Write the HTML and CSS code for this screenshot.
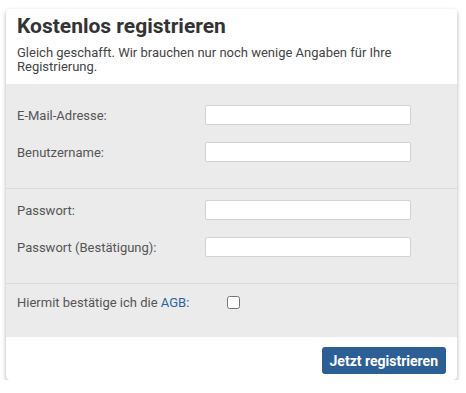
FILE: index.html
```html
<!DOCTYPE html>
<html lang="de">
<head>
    <meta charset="UTF-8">
    <meta name="viewport" content="width=device-width, initial-scale=1.0">
    <title>Kostenlos registrieren</title>
    <link rel="stylesheet" href="styles.css">
</head>
<body>
    <div class="card">
        <div class="card-head">
            <h1>Kostenlos registrieren</h1>
            <p class="intro">Gleich geschafft. Wir brauchen nur noch wenige Angaben für Ihre Registrierung.</p>
        </div>

        <div class="card-body">
            <div class="section section-first">
                <div class="form-row">
                    <label for="email">E-Mail-Adresse:</label>
                    <input type="text" id="email">
                </div>
                <div class="form-row">
                    <label for="username">Benutzername:</label>
                    <input type="text" id="username">
                </div>
            </div>

            <div class="section">
                <div class="form-row">
                    <label for="pw">Passwort:</label>
                    <input type="password" id="pw">
                </div>
                <div class="form-row">
                    <label for="pw2">Passwort (Bestätigung):</label>
                    <input type="password" id="pw2">
                </div>
            </div>

            <div class="section section-last">
                <div class="form-row check-row">
                    <label for="agb">Hiermit bestätige ich die <a href="#">AGB</a>:</label>
                    <input type="checkbox" id="agb">
                </div>
            </div>
        </div>

        <div class="card-foot">
            <button type="button">Jetzt registrieren</button>
        </div>
    </div>
</body>
</html>
```

FILE: styles.css
```css
body {
    margin: 0;
    padding: 9px 0 0 6px;
    background: #fff;
    font-family: Roboto, "Liberation Sans", Arial, sans-serif;
    color: #555;
}
.card {
    width: 451px;
    background: #fff;
    border-radius: 4px;
    box-shadow: 0 2px 4px rgba(0,0,0,0.32);
    overflow: hidden;
}
.card-head {
    padding: 5px 11px 10px;
}
h1 {
    margin: 0;
    font-size: 21px;
    line-height: 25px;
    font-weight: bold;
    color: #333;
}
.intro {
    margin: 7px 0 0;
    font-size: 13px;
    line-height: 14px;
    color: #444;
}
.card-body {
    background: #ebebeb;
}
.section {
    padding: 11px 11px 26px;
    border-bottom: 1px solid #d9d9d9;
}
.section-first {
    padding-top: 21px;
}
.section-last {
    padding-top: 8px;
    padding-bottom: 25px;
    border-bottom: none;
}
.form-row {
    display: flex;
    align-items: center;
    height: 20px;
}
.form-row + .form-row {
    margin-top: 17px;
}
label {
    width: 188px;
    font-size: 13px;
    color: #555;
}
label a {
    color: #2a64a0;
    text-decoration: none;
}
input[type="text"], input[type="password"] {
    width: 206px;
    height: 20px;
    margin: 0;
    padding: 2px 5px;
    border: 1px solid #d2d2d2;
    border-radius: 2px;
    background: #fff;
    box-sizing: border-box;
}
.check-row label {
    width: 210px;
}
input[type="checkbox"] {
    width: 13px;
    height: 13px;
    margin: 0;
}
.card-foot {
    display: flex;
    justify-content: flex-end;
    padding: 10px 11px 6px;
}
button {
    height: 27px;
    padding: 0 8px;
    border: none;
    border-radius: 3px;
    background: #2d5f97;
    color: #fff;
    font-family: Roboto, "Liberation Sans", Arial, sans-serif;
    font-size: 14px;
    font-weight: bold;
    cursor: pointer;
}
```
